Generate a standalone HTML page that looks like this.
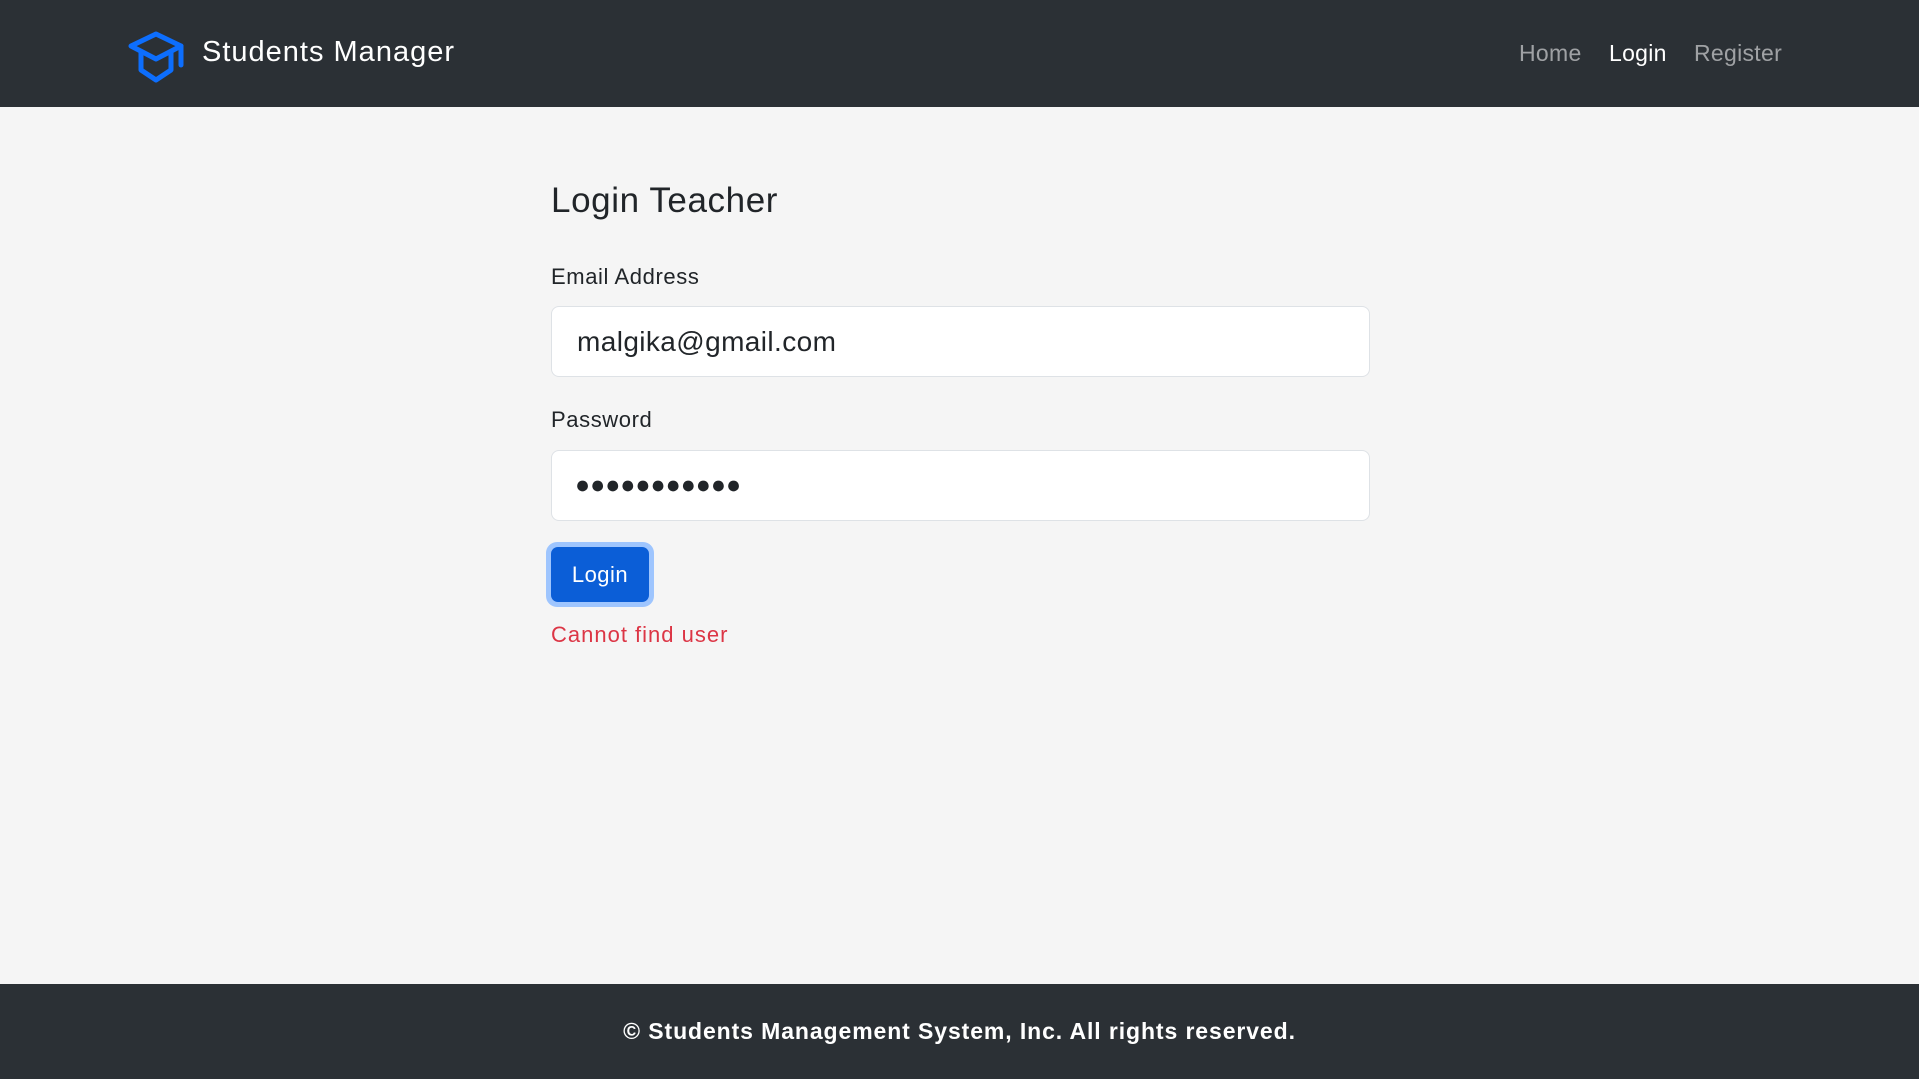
<!DOCTYPE html>
<html><head><meta charset="utf-8"><style>
*{box-sizing:border-box;margin:0;padding:0}
body{width:1919px;height:1079px;background:#f5f5f5;font-family:"Liberation Sans",sans-serif;position:relative;overflow:hidden;color:#212529}
.hdr{position:absolute;left:0;top:0;width:1919px;height:107px;background:#2b3035}
.brand{position:absolute;left:202px;top:33px;color:#fff;font-size:29px;line-height:38px;letter-spacing:1px}
.nav{position:absolute;top:38px;font-size:23px;line-height:30px;color:rgba(255,255,255,.55);letter-spacing:.3px}
.ftr{position:absolute;left:0;top:984px;width:1919px;height:95px;background:#2b3035;color:#fff;font-size:23px;text-align:center;line-height:95px;font-weight:bold;letter-spacing:.9px}
.abs{position:absolute}
.lbl{letter-spacing:.6px}
.inp{position:absolute;left:551px;width:819px;height:71px;background:#fff;border:1px solid #dee2e6;border-radius:8px;font-size:28px;padding-left:25px;line-height:69px;letter-spacing:.4px}
</style></head><body>
<div class="hdr">
<svg class="abs" style="left:128px;top:30px" width="60" height="54" viewBox="0 0 60 54"><g fill="none" stroke="#0d6efd" stroke-width="5" stroke-linecap="round" stroke-linejoin="round"><path d="M3 16 L28 4 L53 16 L28 29 Z"/><path d="M13 22 V40 L28 50 L43 40 V22"/><path d="M53 16 V35"/></g></svg>
<div class="brand">Students Manager</div>
<div class="nav" style="left:1519px">Home</div>
<div class="nav" style="left:1609px;color:#fff">Login</div>
<div class="nav" style="left:1694px">Register</div>
</div>
<div class="abs lbl" style="left:551px;top:180px;font-size:35px;line-height:42px">Login Teacher</div>
<div class="abs lbl" style="left:551px;top:263px;font-size:22px;line-height:28px">Email Address</div>
<div class="inp" style="top:306px">malgika@gmail.com</div>
<div class="abs lbl" style="left:551px;top:406px;font-size:22px;line-height:28px">Password</div>
<div class="inp" style="top:450px;letter-spacing:0;font-size:25px;padding-left:23px">●●●●●●●●●●●</div>
<div class="abs" style="left:546px;top:542px;width:108px;height:65px;background:#9ec5fe;border-radius:11px"></div>
<div class="abs" style="left:551px;top:547px;width:98px;height:55px;background:#0b5ed7;border-radius:7px;color:#fff;font-size:22px;text-align:center;line-height:55px;letter-spacing:.5px">Login</div>
<div class="abs lbl" style="left:551px;top:621px;font-size:22px;line-height:28px;color:#dc3545;letter-spacing:1px">Cannot find user</div>
<div class="ftr">© Students Management System, Inc. All rights reserved.</div>
</body></html>
